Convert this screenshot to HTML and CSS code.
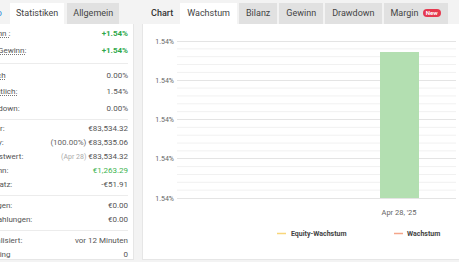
FILE: index.html
```html
<!DOCTYPE html>
<html lang="de">
<head>
    <meta charset="UTF-8">
    <title>Statistiken</title>
    <link rel="stylesheet" href="styles.css">
</head>
<body>
    <div class="page">
        <div class="side">
            <div class="tabs">
                <div class="tab ghost">Info</div>
                <div class="tab active">Statistiken</div>
                <div class="tab">Allgemein</div>
            </div>
            <div class="panel stats">
                <div class="group first">
                    <div class="row tall"><span class="label"><u>Gewinn :</u></span><span class="val up">+1.54%</span></div>
                    <div class="row tall"><span class="label"><u>Abs. Gewinn:</u></span><span class="val up">+1.54%</span></div>
                </div>
                <div class="group second">
                    <div class="row tip"><span class="label"><u>Täglich</u></span><span class="val">0.00%</span></div>
                    <div class="row tip"><span class="label"><u>Monatlich:</u></span><span class="val">1.54%</span></div>
                    <div class="row tip"><span class="label">Drawdown:</span><span class="val">0.00%</span></div>
                </div>
                <div class="group third">
                    <div class="row"><span class="label">Saldor:</span><span class="val">€83,534.32</span></div>
                    <div class="row"><span class="label">Equity:</span><span class="val"><span class="note">(100.00%)</span> €83,535.06</span></div>
                    <div class="row"><span class="label">Höchstwert:</span><span class="val"><span class="note faint">(Apr 28)</span> €83,534.32</span></div>
                    <div class="row"><span class="label">Gewinn:</span><span class="val gain">€1,263.29</span></div>
                    <div class="row"><span class="label">Zinssatz:</span><span class="val">-€51.91</span></div>
                </div>
                <div class="group">
                    <div class="row"><span class="label">Einlagen:</span><span class="val">€0.00</span></div>
                    <div class="row"><span class="label">Auszahlungen:</span><span class="val">€0.00</span></div>
                </div>
                <div class="group">
                    <div class="row"><span class="label">Aktualisiert:</span><span class="val">vor 12 Minuten</span></div>
                    <div class="row"><span class="label">Tracking</span><span class="val">0</span></div>
                </div>
            </div>
        </div>

        <div class="main">
            <div class="tabs">
                <div class="title">Chart</div>
                <div class="tab active">Wachstum</div>
                <div class="tab">Bilanz</div>
                <div class="tab">Gewinn</div>
                <div class="tab">Drawdown</div>
                <div class="tab">Margin <span class="badge">New</span></div>
            </div>
            <div class="panel chart">
                <svg width="317" height="236" viewBox="0 0 317 236">
                    <g stroke="#f1f1f1" stroke-width="1">
                        <line x1="34" x2="313" y1="24.85" y2="24.85"/>
                        <line x1="34" x2="313" y1="32.7" y2="32.7"/>
                        <line x1="34" x2="313" y1="40.55" y2="40.55"/>
                        <line x1="34" x2="313" y1="48.4" y2="48.4"/>
                        <line x1="34" x2="313" y1="64.1" y2="64.1"/>
                        <line x1="34" x2="313" y1="71.95" y2="71.95"/>
                        <line x1="34" x2="313" y1="79.8" y2="79.8"/>
                        <line x1="34" x2="313" y1="87.65" y2="87.65"/>
                        <line x1="34" x2="313" y1="103.35" y2="103.35"/>
                        <line x1="34" x2="313" y1="111.2" y2="111.2"/>
                        <line x1="34" x2="313" y1="119.05" y2="119.05"/>
                        <line x1="34" x2="313" y1="126.9" y2="126.9"/>
                        <line x1="34" x2="313" y1="142.6" y2="142.6"/>
                        <line x1="34" x2="313" y1="150.45" y2="150.45"/>
                        <line x1="34" x2="313" y1="158.3" y2="158.3"/>
                        <line x1="34" x2="313" y1="166.15" y2="166.15"/>
                    </g>
                    <g stroke="#e4e4e4" stroke-width="1">
                        <line x1="34" x2="313" y1="17.5" y2="17.5"/>
                        <line x1="34" x2="313" y1="56.5" y2="56.5"/>
                        <line x1="34" x2="313" y1="95.5" y2="95.5"/>
                        <line x1="34" x2="313" y1="134.5" y2="134.5"/>
                        <line x1="34" x2="313" y1="174.5" y2="174.5"/>
                    </g>
                    <g class="axis" text-anchor="end">
                        <text x="31" y="19.5">1.54%</text>
                        <text x="31" y="58.5">1.54%</text>
                        <text x="31" y="97.5">1.54%</text>
                        <text x="31" y="136.5">1.54%</text>
                        <text x="31" y="176.5">1.54%</text>
                    </g>
                    <rect x="237" y="28" width="39" height="146" fill="#b3dfb1"/>
                    <text class="axis date" x="256" y="191" text-anchor="middle">Apr 28, '25</text>
                    <line x1="134" x2="143" y1="209.5" y2="209.5" stroke="#f8d67a" stroke-width="1.5"/>
                    <text class="legend" x="148" y="212">Equity-Wachstum</text>
                    <line x1="251" x2="260" y1="209.5" y2="209.5" stroke="#f4a58a" stroke-width="1.5"/>
                    <text class="legend" x="264" y="212">Wachstum</text>
                </svg>
            </div>
        </div>
    </div>
</body>
</html>
```

FILE: styles.css
```css
body { margin: 0; background: #f3f3f3; font-family: Roboto, "Liberation Sans", sans-serif; overflow: hidden; }
.page { display: flex; gap: 8px; }

.tabs { display: flex; align-items: flex-end; height: 24px; box-sizing: border-box; padding-top: 3px; gap: 3px; }
.tab { height: 21px; line-height: 21px; padding: 0 6px; font-size: 9px; color: #444; background: #e1e1e1; white-space: nowrap; }
.tab.active { background: #fff; }
.tab.ghost { background: none; width: 42px; text-align: right; padding: 0 8px 0 0; color: #2d8ad8; margin-right: -3px; }

.panel { background: #fff; border: 1px solid #e6e6e6; box-sizing: border-box; }

.side { margin-left: -40px; width: 174px; flex: none; }
.stats { height: 236px; padding-left: 19px; border-top: none; }
.group { padding: 3px 0; border-bottom: 1px solid #ececec; margin-right: 5px; }
.group.first { padding: 1px 0 4px; }
.group.second { padding: 3px 0 2px; }
.group.third { padding: 2px 0 3px; }
.group:last-child { border-bottom: none; }
.row { display: flex; justify-content: space-between; align-items: center; height: 14px; font-size: 8px; color: #555; white-space: nowrap; }
.row.tall { height: 17px; }
.row.tip { height: 16.5px; }
.row u { text-decoration: underline dotted #777; text-underline-offset: 1px; }
.val { color: #555; }
.val.up { color: #2ea84a; font-weight: bold; }
.val.gain { color: #3cb44f; }
.note { color: #666; }
.note.faint { color: #aaa; font-size: 7px; }

.main { width: 330px; flex: none; }
.main .tabs { gap: 2px; }
.title { height: 21px; line-height: 21px; padding: 0 5px 0 9px; font-size: 9px; font-weight: 500; color: #333; }
.main .tab { padding: 0 7px; }
.badge { display: inline-block; background: #e5394f; color: #fff; font-size: 6px; font-weight: bold; line-height: 8px; padding: 0 3px; border-radius: 5px; vertical-align: 1px; margin-left: 2px; }

.chart { height: 236px; border-top: none; }
.chart svg { display: block; }
.axis { font-size: 7px; fill: #666; font-family: Roboto, "Liberation Sans", sans-serif; }
.date { font-size: 7.5px; }
.legend { font-size: 7px; font-weight: bold; fill: #444; font-family: Roboto, "Liberation Sans", sans-serif; }
```
